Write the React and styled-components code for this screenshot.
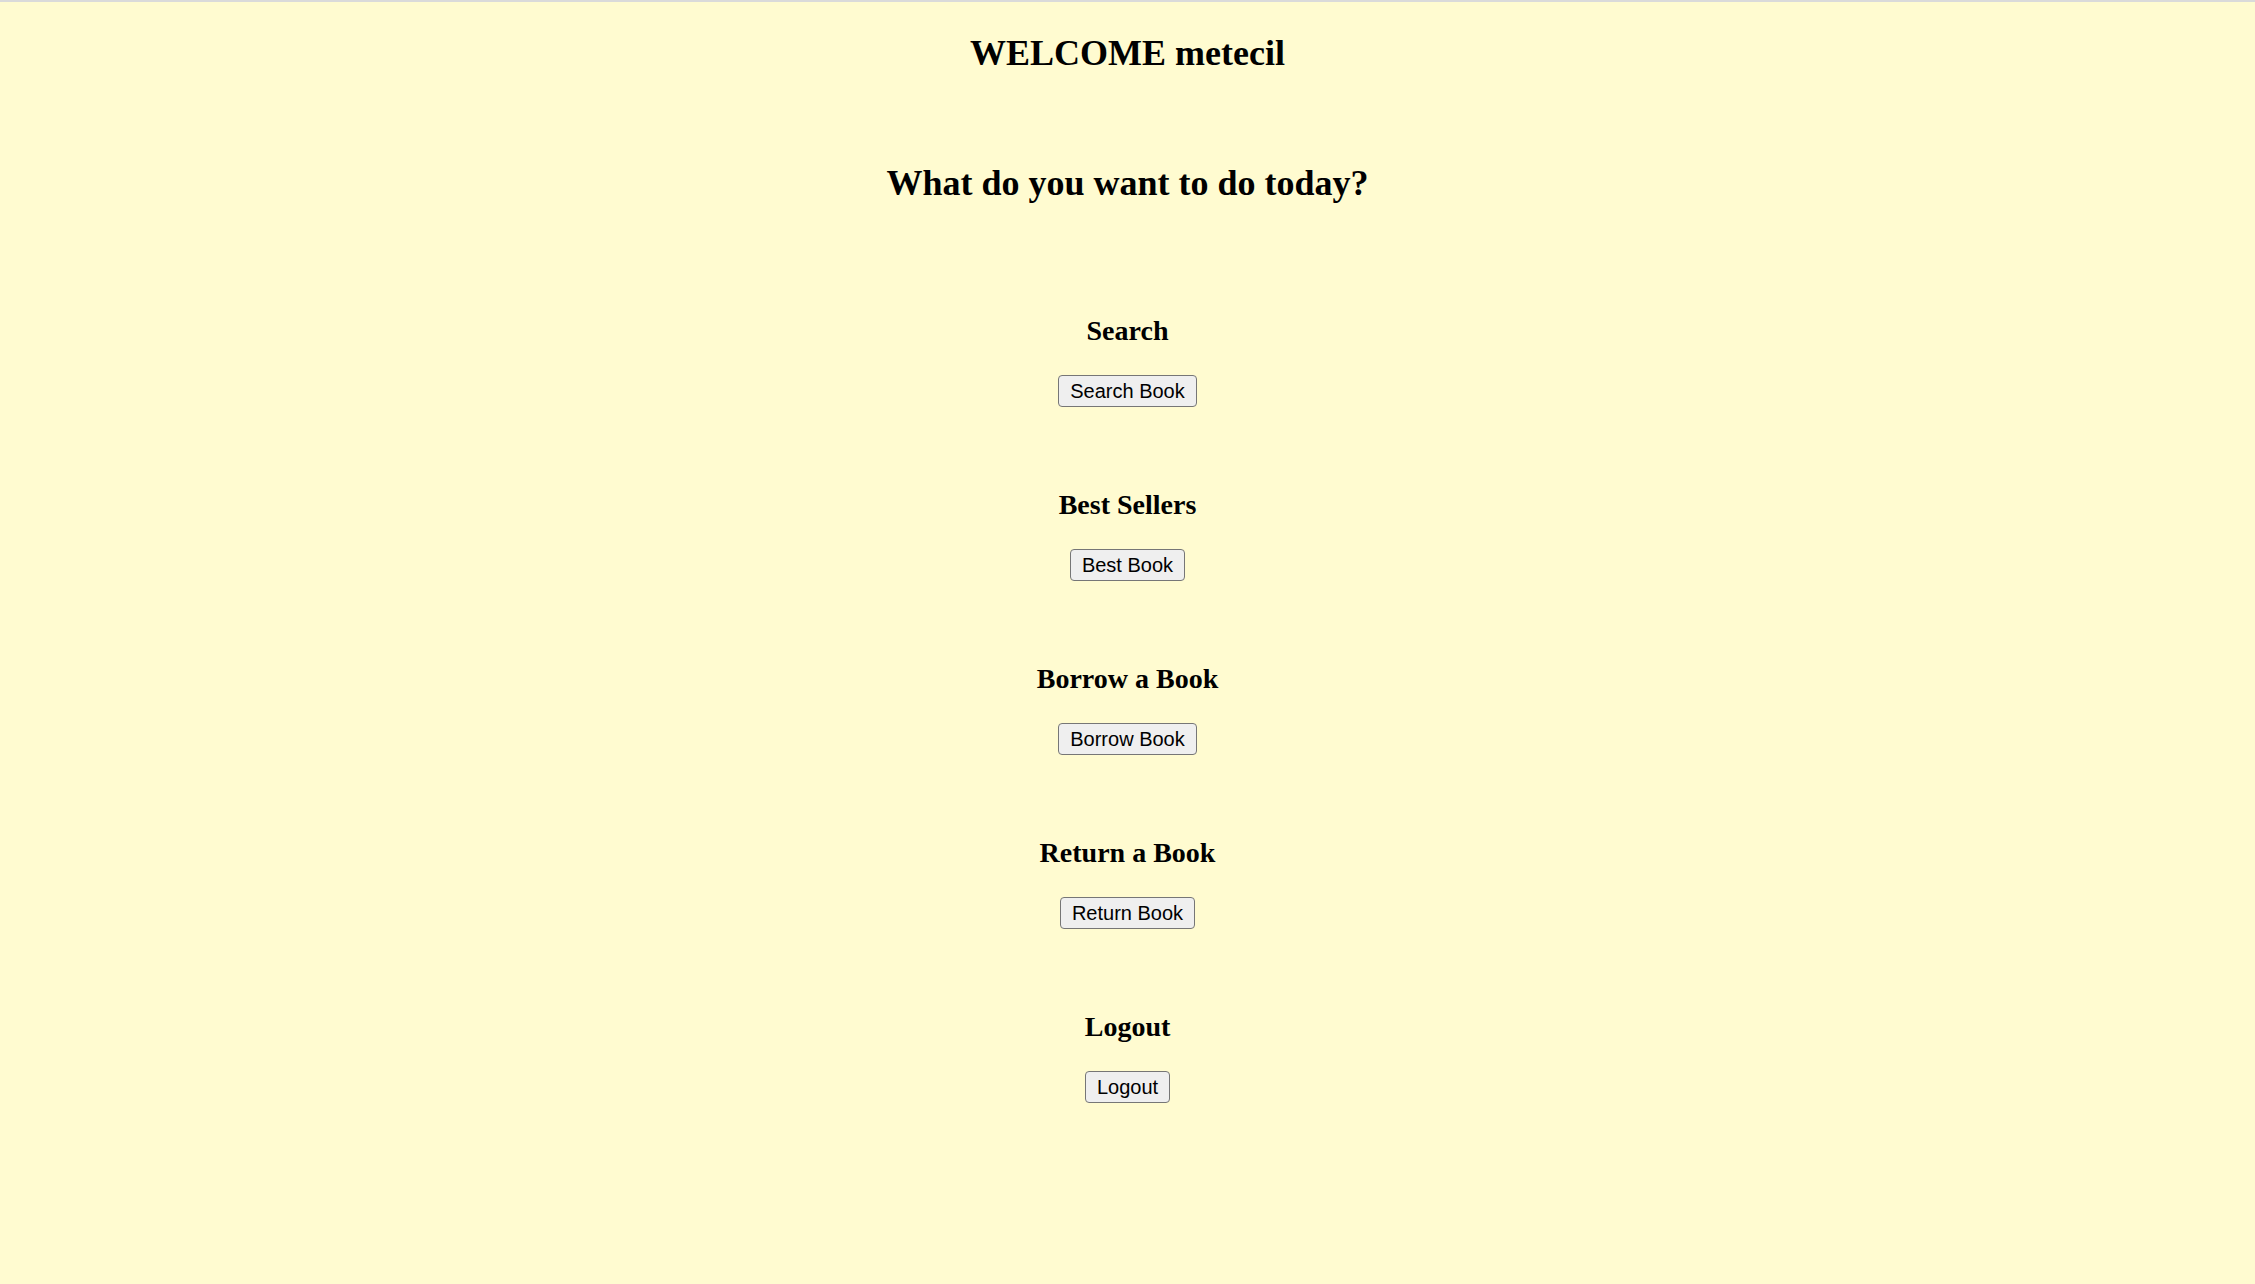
import React from "react";
import styled, { createGlobalStyle } from "styled-components";

const GlobalStyle = createGlobalStyle`
  html, body {
    margin: 0;
    padding: 0;
    background-color: #fffbd0;
  }
  body {
    min-height: 100vh;
    font-family: "Liberation Serif", "Times New Roman", serif;
    color: #000;
  }
`;

const Page = styled.div`
  box-sizing: border-box;
  min-height: 100vh;
  border-top: 2px solid #dadada;
  padding: 31px 0 60px 0;
  display: flex;
  flex-direction: column;
  align-items: center;
  text-align: center;
`;

const Welcome = styled.h2`
  margin: 0;
  font-size: 36px;
  font-weight: bold;
  line-height: 41px;
`;

const Question = styled.h2`
  margin: 89px 0 0 0;
  font-size: 36px;
  font-weight: bold;
  line-height: 41px;
`;

const Menu = styled.div`
  margin-top: 111px;
  display: flex;
  flex-direction: column;
  align-items: center;
  gap: 82px;
`;

const Section = styled.div`
  display: flex;
  flex-direction: column;
  align-items: center;
`;

const Title = styled.h3`
  margin: 0 0 28px 0;
  font-size: 28px;
  font-weight: bold;
  line-height: 32px;
`;

const Button = styled.button`
  box-sizing: border-box;
  height: 32px;
  padding: 0 11px;
  font-family: "Liberation Sans", Arial, sans-serif;
  font-size: 20px;
  color: #000;
  background-color: #efefef;
  border: 1.5px solid #767676;
  border-radius: 4px;
  cursor: pointer;
  &:hover {
    background-color: #e5e5e5;
  }
`;

const items = [
  { title: "Search", label: "Search Book" },
  { title: "Best Sellers", label: "Best Book" },
  { title: "Borrow a Book", label: "Borrow Book" },
  { title: "Return a Book", label: "Return Book" },
  { title: "Logout", label: "Logout" },
];

const App = () => {
  return (
    <>
      <GlobalStyle />
      <Page>
        <Welcome>WELCOME metecil</Welcome>
        <Question>What do you want to do today?</Question>
        <Menu>
          {items.map((item) => (
            <Section key={item.title}>
              <Title>{item.title}</Title>
              <Button type="button">{item.label}</Button>
            </Section>
          ))}
        </Menu>
      </Page>
    </>
  );
};

export default App;
